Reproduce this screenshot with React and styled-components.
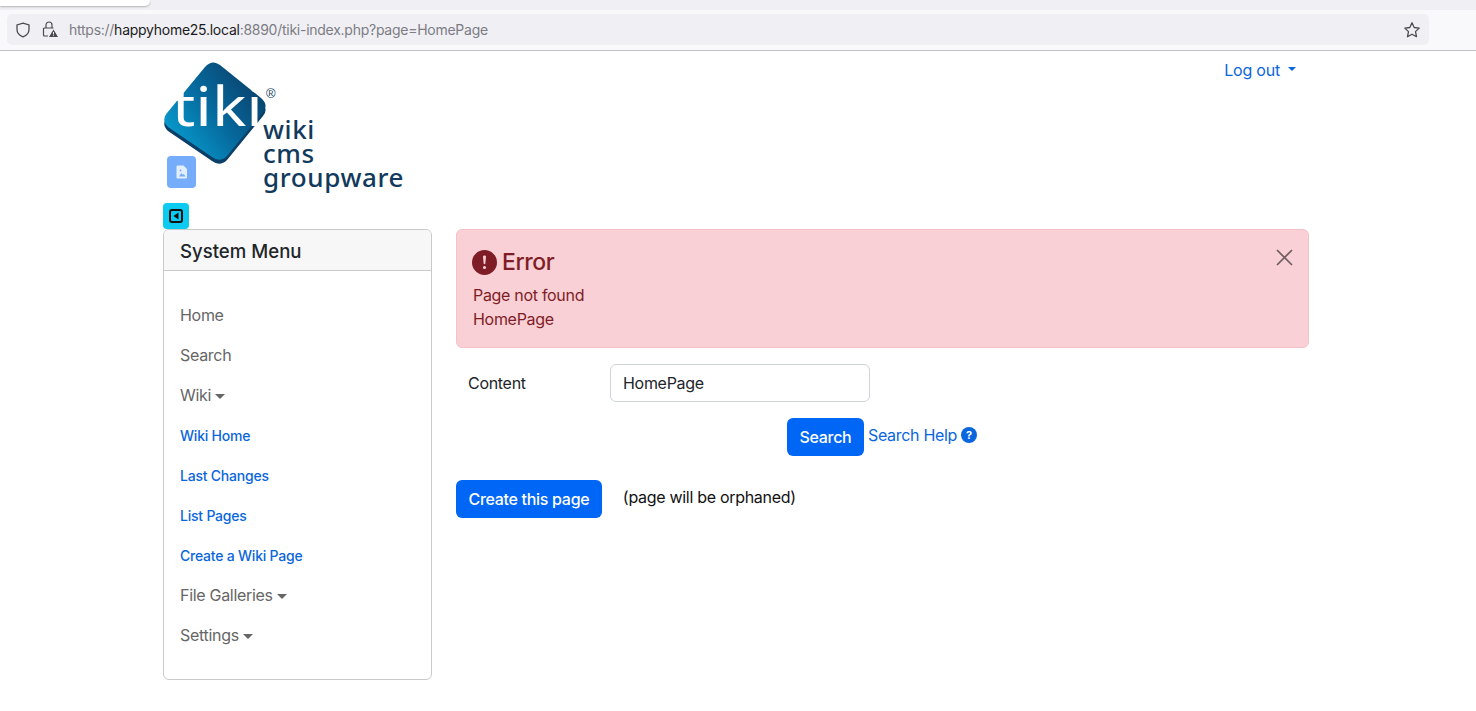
import React from 'react';
import styled, { createGlobalStyle } from 'styled-components';

const LINK = '#0a66dc';

const Global = createGlobalStyle`
  html, body { margin: 0; padding: 0; background: #fff; }
  body { font-family: Inter, "Liberation Sans", sans-serif; font-size: 16px; line-height: 24px; color: #212529; letter-spacing: -.3px; }
  * { box-sizing: border-box; }
  a { text-decoration: none; color: ${LINK}; }
`;

const Page = styled.div`width: 1476px; height: 711px; overflow: hidden; display: flex; flex-direction: column;`;
const TabStrip = styled.div`height: 10px; background: #f0f0f4; flex: none;`;
const ActiveTab = styled.div`width: 150px; height: 6px; background: #fff; border-radius: 0 0 5px 0; box-shadow: 0 1px 2px rgba(0,0,0,.25);`;
const Toolbar = styled.div`height: 41px; flex: none; background: #f9f9fb; border-bottom: 1px solid #c4c4c8; padding: 4px 47px 5px 7px;`;
const UrlBar = styled.div`height: 31px; background: #f0f0f4; border-radius: 5px; display: flex; align-items: center; padding: 0 8px;`;
const BarIcons = styled.div`display: flex; align-items: center; gap: 11px; margin-right: 11px; color: #4a4a50;`;
const Url = styled.div`flex: 1; font-size: 14px; color: #7c7c84; letter-spacing: -.26px;`;
const Host = styled.span`color: #1c1b22;`;

const Wrap = styled.div`width: 1146px; margin-left: 163px; display: flex; flex-direction: column; flex: 1;`;
const Header = styled.header`height: 152px; display: flex; justify-content: space-between; align-items: flex-start;`;
const Logo = styled.div`position: relative; width: 260px; height: 152px;`;
const LogoWords = styled.div`
  position: absolute; left: 100px; top: 66px; font-family: "Noto Sans", sans-serif; font-size: 26px; font-weight: 500; line-height: 24px;
  color: #123a5c; letter-spacing: .6px;
`;
const ImageBtn = styled.div`
  position: absolute; left: 4px; top: 105px; width: 29px; height: 32px; background: #75adfb; border-radius: 4px;
  display: flex; align-items: center; justify-content: center;
`;
const LogoutLink = styled.a`margin: 7px 13px 0 0; display: flex; align-items: center; gap: 8px; letter-spacing: -.2px;`;
const Caret = styled.span`width: 0; height: 0; border-left: 4.8px solid transparent; border-right: 4.8px solid transparent; border-top: 4.8px solid ${LINK}; margin-top: -3px;`;

const Toggle = styled.div`width: 26px; height: 26px; background: #0dcaf0; border-radius: 4px; display: flex; align-items: center; justify-content: center;`;
const Columns = styled.div`display: flex; gap: 24px; align-items: flex-start;`;

const Sidebar = styled.aside`width: 269px; height: 451px; border: 1px solid #c9cacc; border-radius: 6px; overflow: hidden; flex: none;`;
const SideTitle = styled.h3`margin: 0; height: 41px; padding: 0 16px; background: #f7f7f7; border-bottom: 1px solid #c9cacc; font-size: 18.6px; font-weight: 500; line-height: 42px; color: #212529; letter-spacing: 0;`;
const SideList = styled.nav`padding: 24px 16px 0; display: flex; flex-direction: column;`;
const SideItem = styled.a`
  height: 40px; display: flex; align-items: center; gap: 4px; color: ${p => p.$sub ? LINK : '#666'};
  font-size: ${p => p.$sub ? '14px' : '16px'}; font-weight: ${p => p.$sub ? 500 : 400};
  padding-top: ${p => p.$sub ? '2px' : '0'}; letter-spacing: ${p => p.$sub ? '-.22px' : '-.3px'};
`;
const SmallCaret = styled.span`width: 0; height: 0; border-left: 5px solid transparent; border-right: 5px solid transparent; border-top: 5px solid #666; margin-top: 2px;`;

const Main = styled.main`width: 853px; flex: none;`;
const Alert = styled.div`position: relative; height: 119px; background: #f9d0d5; border: 1px solid #f5c2c7; border-radius: 6px; padding: 15px 16px; color: #7f1d27;`;
const AlertHead = styled.div`display: flex; align-items: center; gap: 5px; height: 34px; font-size: 23px; font-weight: 500; margin: 0 0 4px -1px; letter-spacing: -.4px;`;
const Close = styled.div`position: absolute; top: 19px; right: 15px; color: #6f5c5e; line-height: 0;`;
const FormRow = styled.div`display: flex; align-items: center; margin-top: 16px; height: 38px; padding-left: 12px;`;
const Label = styled.label`width: 142px; color: #212529;`;
const Input = styled.input`width: 260px; height: 38px; border: 1px solid #ced4da; border-radius: 6px; padding: 0 12px; font: inherit; letter-spacing: inherit; color: #212529; background: #fff;`;
const SearchRow = styled.div`display: flex; margin-top: 16px; padding-left: 331px; align-items: flex-start; gap: 4px;`;
const Button = styled.button`height: 38px; padding: 0 12.5px; background: #0066f5; border: 0; border-radius: 6px; color: #fff; font: inherit; letter-spacing: inherit; font-weight: 500; white-space: nowrap;`;
const HelpLink = styled.a`display: flex; align-items: center; gap: 4px; height: 34px;`;
const CreateRow = styled.div`display: flex; margin-top: 24px; align-items: flex-start;`;
const Orphan = styled.span`margin-left: 21px; line-height: 34px; color: #111;`;

const menu = [
  ['Home'], ['Search'], ['Wiki', 'c'], ['Wiki Home', 's'], ['Last Changes', 's'], ['List Pages', 's'],
  ['Create a Wiki Page', 's'], ['File Galleries', 'c'], ['Settings', 'c'],
];

const DIAMOND = 'M4 52 L42 6 Q49 -2 57 4 L98 37 Q106 44 100 51 L64 95 Q57 102 49 96 L5 66 Q-2 59 4 52Z';

function TikiMark() {
  return (
    <svg width="125" height="115" viewBox="0 0 125 115" style={{ position: 'absolute', left: 0, top: 10, overflow: 'visible' }}>
      <defs>
        <linearGradient id="tg" x1="0" y1="0.85" x2="1" y2="0.15">
          <stop offset="0" stopColor="#08a4d6" />
          <stop offset=".5" stopColor="#06689c" />
          <stop offset="1" stopColor="#0b3a63" />
        </linearGradient>
      </defs>
      <path d={DIAMOND} fill="#0b3f68" transform="translate(0 4)" />
      <path d={DIAMOND} fill="url(#tg)" />
      <text x="9" y="65" fontFamily="Noto Sans, sans-serif" fontSize="54" fontWeight="400" fill="#fff" textLength="91" lengthAdjust="spacingAndGlyphs" letterSpacing="0">tiki</text>
      <text x="103" y="37" fontFamily="Liberation Sans, sans-serif" fontSize="13" fill="#123a5c" letterSpacing="0">®</text>
    </svg>
  );
}

export default function App() {
  return (
    <Page>
      <Global />
      <TabStrip><ActiveTab /></TabStrip>
      <Toolbar>
        <UrlBar>
          <BarIcons>
            <svg width="16" height="16" viewBox="0 0 16 16" fill="none" stroke="currentColor" strokeWidth="1.3"><path d="M8 1.2 14 3v4.500c0 3.600-2.600 6-6 7.300-3.400-1.300-6-3.700-6-7.300V3z" /></svg>
            <svg width="16" height="17" viewBox="0 0 16 17" fill="none" stroke="currentColor" strokeWidth="1.2"><path d="M4 7V4a3 3 0 0 1 6 0v3M6 15H2.500a1 1 0 0 1-1-1V8a1 1 0 0 1 1-1h9" /><path d="M11.500 8.500 16 16H7z" fill="currentColor" stroke="none" /><path d="M11.500 11v2.500M11.500 14.300v.8" stroke="#f0f0f4" strokeWidth="1" /></svg>
          </BarIcons>
          <Url>https://<Host>happyhome25.local</Host>:8890/tiki-index.php?page=HomePage</Url>
          <svg width="18" height="18" viewBox="0 0 18 18" fill="none" stroke="#4a4a50" strokeWidth="1.3" strokeLinejoin="round"><path d="M9 1.800 11.200 6.500 16.200 7.100 12.500 10.600 13.500 15.700 9 13.200 4.500 15.700 5.500 10.600 1.800 7.100 6.800 6.500Z" /></svg>
        </UrlBar>
      </Toolbar>
      <Wrap>
        <Header>
          <Logo>
            <TikiMark />
            <LogoWords>wiki<br />cms<br />groupware</LogoWords>
            <ImageBtn>
              <svg width="12" height="14" viewBox="0 0 12 14"><path d="M1.500 0.500h6l3.500 3.500v8.500a1 1 0 0 1-1 1h-8.500a1 1 0 0 1-1-1v-11a1 1 0 0 1 1-1z" fill="#e3eefe" /><path d="M3 11.500 5.300 8l1.400 1.800L7.800 9 9.500 11.500z" fill="#75adfb" /><circle cx="4.500" cy="5.500" r="1" fill="#75adfb" /></svg>
            </ImageBtn>
          </Logo>
          <LogoutLink href="#">Log out <Caret /></LogoutLink>
        </Header>
        <Toggle>
          <svg width="14" height="14" viewBox="0 0 14 14"><rect x="1" y="1" width="12" height="12" rx="2" fill="none" stroke="#111" strokeWidth="2" /><path d="M9.500 3.500v7L4.500 7z" fill="#111" /></svg>
        </Toggle>
        <Columns>
          <Sidebar>
            <SideTitle>System Menu</SideTitle>
            <SideList>
              {menu.map(([t, k]) => (
                <SideItem key={t} href="#" $sub={k === 's'}>{t}{k === 'c' && <SmallCaret />}</SideItem>
              ))}
            </SideList>
          </Sidebar>
          <Main>
            <Alert>
              <AlertHead>
                <svg width="25" height="25" viewBox="0 0 16 16" fill="#7f1d27"><path d="M16 8A8 8 0 1 1 0 8a8 8 0 0 1 16 0zM8 3.500a.95.95 0 0 0-.95 1.050l.4 4a.55.55 0 0 0 1.100 0l.4-4A.95.95 0 0 0 8 3.500zm0 6.700a1 1 0 1 0 0 2 1 1 0 0 0 0-2z" /></svg>
                Error
              </AlertHead>
              <div>Page not found</div>
              <div>HomePage</div>
              <Close><svg width="17" height="17" viewBox="0 0 17 17" stroke="currentColor" strokeWidth="1.700"><path d="M1 1l15 15M16 1 1 16" /></svg></Close>
            </Alert>
            <FormRow>
              <Label>Content</Label>
              <Input defaultValue="HomePage" />
            </FormRow>
            <SearchRow>
              <Button>Search</Button>
              <HelpLink href="#">Search Help
                <svg width="16" height="16" viewBox="0 0 16 16" fill={LINK}><circle cx="8" cy="8" r="8" /><text x="8" y="12" textAnchor="middle" fontSize="11" fontWeight="700" fill="#fff" fontFamily="Inter, sans-serif">?</text></svg>
              </HelpLink>
            </SearchRow>
            <CreateRow>
              <Button>Create this page</Button>
              <Orphan>(page will be orphaned)</Orphan>
            </CreateRow>
          </Main>
        </Columns>
      </Wrap>
    </Page>
  );
}
